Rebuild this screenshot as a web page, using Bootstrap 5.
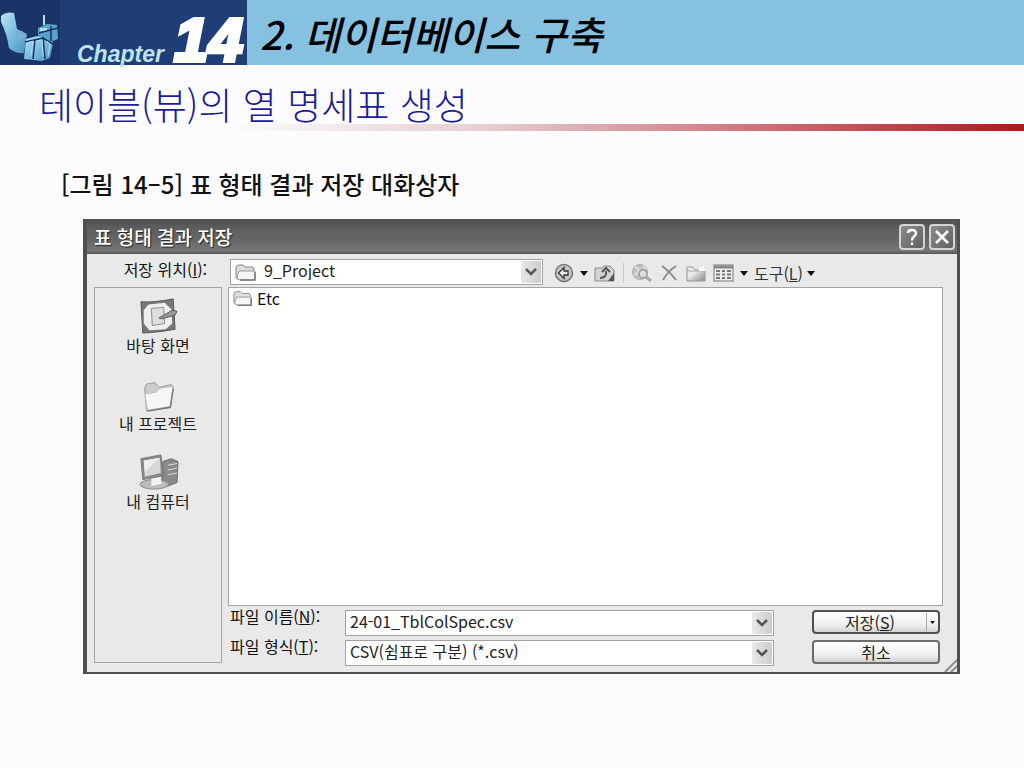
<!DOCTYPE html>
<html lang="ko">
<head>
<meta charset="utf-8">
<meta name="viewport" content="width=device-width, initial-scale=1">
<title>2. 데이터베이스 구축</title>
<link rel="stylesheet" href="https://cdn.jsdelivr.net/npm/bootstrap@5.3.0/dist/css/bootstrap.min.css">
<style>
body{background:#fcfcfe;color:#111;font-family:"Noto Sans CJK KR",sans-serif}
.slide-head{height:65px;background:#86c1df}
.chapter{width:247px;background:#1f3e78;font-family:"Liberation Sans",sans-serif;font-style:italic;font-weight:700}
.chapter-art{width:60px;height:65px}
.chapter-word{font-size:23px;line-height:26px;color:#bfe3ee;margin:41px 0 0 17px}
.chapter-no{font-size:62px;line-height:62px;color:#fff;margin:9px 0 0 10px;-webkit-text-stroke:4px #fff}
.slide-title{font-size:39px;line-height:56px;font-style:italic;font-weight:500;color:#000;margin:5px 0 0 13px}
.topic{font-size:37px;line-height:56px;font-weight:300;color:#1c1c94;margin:0;padding:11px 0 0 39px;height:59px}
.rule{height:7px;background:linear-gradient(90deg,#fcfcfe 22%,#e6cfd2 47%,#cf8288 70%,#b3151d)}
.figure-name{font-size:24px;line-height:36px;font-weight:500;margin:35px 0 0 61px}
.dialog-box{margin:17px 64px 24px 83px;border:solid #505050;border-width:1px 3px 2px 4px;background:#e9e9e9;font-size:16px;line-height:20px}
.title-bar{height:34px;background:linear-gradient(#525252,#606060 30%,#666 60%,#777 90%,#555);color:#fff;padding:0 2px 0 7px}
.title-bar h3{font-size:19px;line-height:24px;font-weight:500;margin:0;text-shadow:1px 1px 1px #222}
.cap-btn{width:26px;height:26px;padding:0;border:2px solid #d4d4d4;border-radius:4px;background:linear-gradient(135deg,#8b8b8b,#626262)}
.dialog-body{padding:0 14px 9px 7px}
.tool-row{height:33px;padding-top:5px}
.loc-label{width:113px;margin-right:23px}
.pick{border:1px solid #a2a2a2;background:#fff;height:26px;width:100%;padding:0 26px 4px 4px;color:#222;appearance:none;border-radius:0;font:inherit;line-height:20px}
.pick-loc{padding-left:33px}
.loc{width:313px}
.over-left{position:absolute;left:5px;top:4px;pointer-events:none}
.over-right{position:absolute;right:2px;top:2px;width:20px;height:22px;border:0;padding:0;background:linear-gradient(90deg,#e8e8e8,#cdcdcd);border-radius:2px;pointer-events:none}
.tool{border:0;background:none;padding:0;color:#333;line-height:20px}
.tools{gap:6px;margin-left:11px}
.tool-pair{gap:6px}
.caret-ico{width:8px;height:5px}
.divide{width:1px;height:20px;background:#c8c8c8;margin:0 1px}
.places{width:128px;border:1px solid #a4a4a4;padding-top:9px;margin-right:6px}
.place{border:0;background:none;padding:0;height:78px;line-height:20px;color:#222}
.place svg{width:44px;height:38px}
.files{height:319px;border:1px solid #a4a4a4;background:#fff}
.field-row{height:30px}
.field-row:last-child{height:27px}
.field-label{width:117px;padding-left:2px}
.push{width:128px;height:24px;border:2px solid #6c6c6c;border-radius:4px;background:linear-gradient(#fff,#eee 65%,#d2d2d2);padding:0;line-height:18px;color:#222;margin:0 3px 0 38px}
.push-main{border-color:#505050}
.split{width:12px;border-left:1px solid #aaa;height:18px}
.grip{position:absolute;right:0;bottom:0}
</style>
</head>
<body>
<header class="slide-head d-flex">
  <div class="chapter d-flex flex-shrink-0">
    <svg class="chapter-art flex-shrink-0" viewBox="0 0 60 65" aria-hidden="true">
      <defs><linearGradient id="ice" x2="1" y2="1"><stop stop-color="#b7e6f4"/><stop offset=".6" stop-color="#6fb4d8"/><stop offset="1" stop-color="#4d8dbd"/></linearGradient></defs>
      <rect width="60" height="65" fill="#1b3468"/>
      <path d="M1 16Q6 11 14 13L17 29 27 34 24 53Q15 54 9 48Q7 34 1 22Z" fill="url(#ice)"/>
      <path d="M15 30Q22 29 27 36L18 42Z" fill="#78add5"/>
      <path d="M26 39L37 36 50 37 53 43 50 58 42 61 24 59Z" fill="url(#ice)"/>
      <path d="M38 28L47 24 57 25 58 39 50 42 38 35Z" fill="#5ba3cb"/>
      <path d="M43 15h2v10h-2zM40 28h7v3h-7z" fill="#b8ddeb"/>
      <path d="M35 39L33 59M43 37L45 59M51 26V41M25 42L43 38 53 44M39 33L58 28" stroke="#153263" stroke-width="1.500" fill="none"/>
      <path d="M27 43L33 41 31 56M37 41L42 40 43 56M47 41L50 45 48 56" stroke="#b1dff0" fill="none"/>
    </svg>
    <span class="chapter-word">Chapter</span><span class="chapter-no">14</span>
  </div>
  <h1 class="slide-title text-nowrap">2. 데이터베이스 구축</h1>
</header>
<main>
  <h2 class="topic text-nowrap">테이블(뷰)의 열 명세표 생성</h2>
  <div class="rule"></div>
  <p class="figure-name">[그림 14–5] 표 형태 결과 저장 대화상자</p>

  <section class="dialog-box position-relative" aria-label="표 형태 결과 저장">
    <div class="title-bar d-flex align-items-center">
      <h3 class="me-auto">표 형태 결과 저장</h3>
      <button type="button" class="cap-btn me-1 d-flex" aria-label="도움말"><svg width="22" height="22" viewBox="0 0 22 22" fill="none" stroke="#fff" stroke-width="2.4"><path d="M7 7Q7 4 11 4Q15 4 15 7.500Q15 9 12.500 11Q11 12 11 14.500M11 16.500V19"/></svg></button>
      <button type="button" class="cap-btn d-flex" aria-label="닫기"><svg width="22" height="22" viewBox="0 0 22 22" stroke="#fff" stroke-width="2.600"><path d="M5 5L17 17M17 5L5 17"/></svg></button>
    </div>
    <div class="dialog-body">
      <div class="tool-row d-flex">
        <label class="loc-label text-end text-nowrap" for="loc">저장 위치(<u>I</u>):</label>
        <div class="loc position-relative">
          <select class="pick pick-loc" id="loc"><option>9_Project</option></select>
          <svg class="over-left" width="22" height="18" viewBox="0 0 22 18"><use href="#folder"/></svg>
          <span class="over-right d-flex align-items-center justify-content-center"><svg width="12" height="8" viewBox="0 0 12 8"><use href="#chev"/></svg></span>
        </div>
        <div class="tools d-flex align-items-center">
          <button type="button" class="tool tool-pair d-flex align-items-center" aria-label="뒤로">
            <svg width="20" height="20" viewBox="0 0 20 20"><circle cx="10" cy="10" r="8.500" fill="#c4c4c4" stroke="#777" stroke-width="1.500"/><path d="M4.500 10L10 4.500V8H14V12H10V15.500Z" fill="#eee" stroke="#333" stroke-width="1.300"/></svg>
            <svg class="caret-ico" viewBox="0 0 8 5"><use href="#tri"/></svg></button>
          <button type="button" class="tool d-flex" aria-label="한 수준 위로"><svg width="22" height="20" viewBox="0 0 22 20"><path d="M1 5H8L10 3H16L20 7V18H1Z" fill="#d2d2d2" stroke="#888"/><path d="M14 18L20 10V18Z" fill="#555"/><path d="M6 15Q13 15 12 8M8 9L12 5 16 9" fill="none" stroke="#555" stroke-width="2"/></svg></button>
          <span class="divide"></span>
          <button type="button" class="tool d-flex" aria-label="웹 검색"><svg width="22" height="20" viewBox="0 0 22 20"><circle cx="9" cy="9" r="7.500" fill="#c1c1c1" stroke="#aaa"/><path d="M4 4Q9 5 7 10L3 12M12 3L15 6" stroke="#ddd" stroke-width="2" fill="none"/><circle cx="12" cy="11" r="4" fill="#ddd" stroke="#999" stroke-width="1.500"/><path d="M15 14L20 18" stroke="#aaa" stroke-width="3"/></svg></button>
          <button type="button" class="tool d-flex" aria-label="삭제"><svg width="20" height="20" viewBox="0 0 20 20"><path d="M3 3Q9 7 17 17M17 3Q9 8 4 17" stroke="#8c8c8c" stroke-width="2" fill="none"/></svg></button>
          <button type="button" class="tool d-flex" aria-label="새 폴더"><svg width="22" height="20" viewBox="0 0 22 20"><defs><linearGradient id="fold" x2="1" y2="1"><stop offset=".4" stop-color="#e8e8e8"/><stop offset="1" stop-color="#888"/></linearGradient></defs><path d="M2 18V4H8L10 7H20V18Z" fill="url(#fold)" stroke="#999"/><path d="M2 8H20" stroke="#aaa"/><path d="M14 4L16 5 19 2 19 6 21 8H14Z" fill="#fff"/></svg></button>
          <button type="button" class="tool tool-pair d-flex align-items-center" aria-label="보기">
            <svg width="21" height="18" viewBox="0 0 21 18"><rect x="1" y="1" width="19" height="16" fill="#eee" stroke="#777"/><path d="M1 3H20" stroke="#888" stroke-width="3"/><path d="M3 7H7M9 7H12M14 7H18M3 10.500H7M9 10.500H12M14 10.500H18M3 14H7M9 14H12M14 14H18" stroke="#777" stroke-width="2"/></svg>
            <svg class="caret-ico" viewBox="0 0 8 5"><use href="#tri"/></svg></button>
          <button type="button" class="tool d-flex align-items-center text-nowrap gap-1"><span>도구(<u>L</u>)</span><svg class="caret-ico" viewBox="0 0 8 5"><use href="#tri"/></svg></button>
        </div>
      </div>
      <div class="d-flex">
        <nav class="places d-flex flex-column flex-shrink-0" aria-label="위치">
          <button type="button" class="place d-flex flex-column align-items-center">
            <svg viewBox="0 0 44 40"><path d="M4 5Q17 6 38 2L40 34Q25 37 6 38Z" fill="#777" stroke="#555"/><path d="M12 8L29 6 36 13 37 28 30 34 13 35 7 28 7 14Z" fill="#eee"/><path d="M15 12L28 11 29 28 16 30Z" fill="#ddd" stroke="#888"/><path d="M23 22L37 14 42 15 40 19 26 23Z" fill="#999" stroke="#555"/></svg>바탕 화면</button>
          <button type="button" class="place d-flex flex-column align-items-center">
            <svg viewBox="0 0 44 40"><path d="M8 15Q9 8 13 9L19 8 23 13 36 10 38 12 35 34 10 38Z" fill="#ccc" stroke="#999"/><path d="M8 20L20 18 24 14 38 12 35 33 11 37Z" fill="#f7f7f7" stroke="#bbb"/><path d="M38 14L35 34 11 38" stroke="#777" stroke-width="1.500" fill="none"/></svg>내 프로젝트</button>
          <button type="button" class="place d-flex flex-column align-items-center">
            <svg viewBox="0 0 44 40"><path d="M27 9L36 6 43 9 42 31 32 35 26 31Z" fill="#8a8a8a" stroke="#666"/><path d="M32 13L42 11M32 18L42 16M32 23L42 21" stroke="#ddd"/><ellipse cx="18" cy="33" rx="15" ry="5" fill="#bbb" stroke="#888"/><path d="M15 26L24 24 26 32 15 35Z" fill="#f2f2f2"/><path d="M4 6L25 2 28 24 6 28Z" fill="#888" stroke="#777"/><path d="M7 8L24 5 25 21 8 25Z" fill="#d7d7d7"/><path d="M7 8L24 5 8 20Z" fill="#eee"/></svg>내 컴퓨터</button>
        </nav>
        <div class="flex-grow-1">
          <div class="files"><a href="#etc" class="d-inline-flex text-reset text-decoration-none ms-1 gap-1" id="etc"><svg width="20" height="20" viewBox="0 0 22 18"><use href="#folder"/></svg>Etc</a></div>
          <form>
            <div class="field-row d-flex">
              <label class="field-label" for="fname">파일 이름(<u>N</u>):</label>
              <div class="position-relative flex-grow-1 mt-1"><input class="pick d-block" id="fname" type="text" value="24-01_TblColSpec.csv"><span class="over-right d-flex align-items-center justify-content-center"><svg width="12" height="8" viewBox="0 0 12 8"><use href="#chev"/></svg></span></div>
              <button type="button" class="push push-main d-flex align-items-center mt-1"><span class="flex-grow-1">저장(<u>S</u>)</span><span class="split d-flex align-items-center justify-content-center"><svg width="5" height="3" viewBox="0 0 8 5"><use href="#tri"/></svg></span></button>
            </div>
            <div class="field-row d-flex">
              <label class="field-label" for="ftype">파일 형식(<u>T</u>):</label>
              <div class="position-relative flex-grow-1 mt-1"><select class="pick d-block" id="ftype"><option>CSV(쉼표로 구분) (*.csv)</option></select><span class="over-right d-flex align-items-center justify-content-center"><svg width="12" height="8" viewBox="0 0 12 8"><use href="#chev"/></svg></span></div>
              <button type="button" class="push mt-1">취소</button>
            </div>
          </form>
        </div>
      </div>
    </div>
    <svg class="grip" width="14" height="14" viewBox="0 0 14 14" stroke="#8c8c8c" stroke-width="2"><path d="M2 14L14 2M8 14L14 8"/></svg>
  </section>
</main>
<svg width="0" height="0" class="position-absolute" aria-hidden="true"><defs>
  <g id="folder"><path d="M1 5Q1 2 4 2H8L10 4H18Q19 4 19 7V16H3Q1 16 1 14Z" fill="#ddd" stroke="#888"/><path d="M4 8H20V15Q20 17 18 17H5Q2 17 2 14Z" fill="#f6f6f6" stroke="#999"/><path d="M20 9V17H5" fill="none" stroke="#777" stroke-width="1.500"/></g>
  <path id="chev" d="M1 1L6 6 11 1" fill="none" stroke="#555" stroke-width="2.500"/>
  <path id="tri" d="M0 0H8L4 5Z" fill="#111"/>
</defs></svg>
<script src="https://cdn.jsdelivr.net/npm/bootstrap@5.3.0/dist/js/bootstrap.bundle.min.js"></script>
</body>
</html>
